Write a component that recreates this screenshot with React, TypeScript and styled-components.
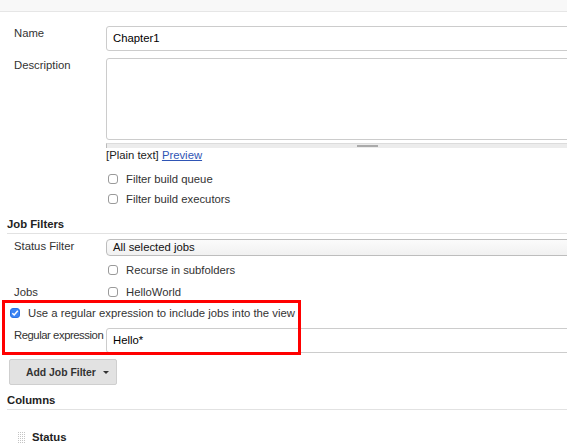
import React from 'react'
import styled, { createGlobalStyle } from 'styled-components'

const GlobalStyle = createGlobalStyle`
	html, body {
		margin: 0;
		padding: 0;
		background: #fff;
		overflow: hidden;
	}
	body {
		font-family: "Liberation Sans", Arial, sans-serif;
		font-size: 11.3px;
		color: #333;
	}
`

const TopBar = styled.div`
	height: 11px;
	background: #f8f8f8;
	border-bottom: 1px solid #e6e6e6;
`

const Page = styled.div`
	width: 640px;
	padding: 14px 0 0 7px;
`

const Row = styled.div<{ $top?: number, $height?: number }>`
	display: flex;
	align-items: flex-start;
	margin-top: ${p => p.$top ?? 0}px;
	min-height: ${p => p.$height ?? 20}px;
`

const Label = styled.div<{ $center?: boolean, $tight?: boolean }>`
	width: 99px;
	flex: none;
	box-sizing: border-box;
	padding-left: 7px;
	line-height: 14px;
	white-space: nowrap;
	letter-spacing: ${p => (p.$tight ? '-0.45px' : 'normal')};
	align-self: ${p => (p.$center ? 'center' : 'flex-start')};
`

const Field = styled.div`
	flex: 1;
	min-width: 0;
`

const TextInput = styled.div`
	box-sizing: border-box;
	height: 25px;
	border: 1px solid #ccc;
	border-radius: 3px;
	padding: 0 6px;
	line-height: 23px;
	color: #000;
	background: #fff;
`

const TextArea = styled.div`
	box-sizing: border-box;
	height: 82px;
	border: 1px solid #ccc;
	border-radius: 3px;
	background: #fff;
`

const ResizeBar = styled.div`
	position: relative;
	margin-top: 3px;
	height: 4px;
	background: #ececec;
	border-top: 1px solid #dcdcdc;
	border-left: 1px solid #bbb;
	&::after {
		content: '';
		position: absolute;
		left: 250px;
		top: 1px;
		width: 21px;
		height: 2px;
		background: #aaa;
	}
`

const Note = styled.div`
	line-height: 14px;
	color: #222;
	a {
		color: #2f55b5;
		text-decoration: underline;
	}
`

const CheckRow = styled.label<{ $indent?: number }>`
	display: flex;
	align-items: center;
	height: 20px;
	gap: 8px;
	padding-left: ${p => p.$indent ?? 2}px;
	color: #333;
	white-space: nowrap;
`

const Box = styled.span<{ $checked?: boolean }>`
	box-sizing: border-box;
	width: 10px;
	height: 10px;
	flex: none;
	border-radius: 3px;
	border: 1px solid ${p => (p.$checked ? '#2a72e6' : '#9a9a9a')};
	background: ${p => (p.$checked ? '#3b84f4' : '#fff')};
	display: flex;
	align-items: center;
	justify-content: center;
`

const SectionHeader = styled.div<{ $top?: number }>`
	padding: ${p => p.$top ?? 8}px 0 2px;
	line-height: 14px;
	font-weight: bold;
	color: #222;
	border-bottom: 1px solid #e2e2e2;
`

const Select = styled.div`
	box-sizing: border-box;
	height: 17px;
	border: 1px solid #bdbdbd;
	border-radius: 4px;
	background: linear-gradient(#fbfbfb, #f1f1f1);
	padding-left: 6px;
	line-height: 15px;
	color: #111;
`

const Highlighted = styled.div`
	position: relative;
	margin-top: 1px;
`

const Marker = styled.span`
	position: absolute;
	left: -5px;
	top: -3px;
	width: 299px;
	height: 55px;
	box-sizing: border-box;
	border: 3px solid #f00;
	pointer-events: none;
`

const Button = styled.button`
	display: flex;
	align-items: center;
	margin: 6px 0 0 2px;
	width: 108px;
	height: 26px;
	box-sizing: border-box;
	padding: 0 7px 0 16px;
	border: 1px solid #cfcfcf;
	border-radius: 2px;
	background: #e2e2e2;
	font-family: inherit;
	font-size: 10.4px;
	font-weight: bold;
	color: #333;
	white-space: nowrap;
`

const Caret = styled.span`
	flex: none;
	margin-left: auto;
	width: 0;
	height: 0;
	border-left: 3px solid transparent;
	border-right: 3px solid transparent;
	border-top: 3px solid #333;
`

const ColumnItem = styled.div`
	display: flex;
	align-items: center;
	gap: 6px;
	margin: 20px 0 0 10px;
	font-weight: bold;
	color: #222;
	line-height: 14px;
`

const Check = () => (
	<svg width="8" height="8" viewBox="0 0 8 8">
		<path d="M1.3 4.2 L3.2 6 L6.8 1.8" fill="none" stroke="#fff" strokeWidth="1.5" />
	</svg>
)

const Grip = () => (
	<svg width="9" height="13" viewBox="0 0 9 13">
		{Array.from({ length: 6 }).map((_, r) =>
			Array.from({ length: 4 }).map((_, c) => (
				<rect key={`${r}-${c}`} x={c * 2 + 1} y={r * 2 + 1} width="1" height="1" fill="#c4c4c4" />
			))
		)}
	</svg>
)

export default function App() {
	return (
		<>
			<GlobalStyle />
			<TopBar />
			<Page>
				<Row $height={25}>
					<Label>Name</Label>
					<Field><TextInput>Chapter1</TextInput></Field>
				</Row>
				<Row $top={7}>
					<Label>Description</Label>
					<Field>
						<TextArea />
						<ResizeBar />
						<Note>[Plain text] <a>Preview</a></Note>
					</Field>
				</Row>
				<Row $top={7}>
					<Label />
					<Field>
						<CheckRow><Box />Filter build queue</CheckRow>
						<CheckRow><Box />Filter build executors</CheckRow>
					</Field>
				</Row>
				<SectionHeader>Job Filters</SectionHeader>
				<Row $top={5} $height={17}>
					<Label>Status Filter</Label>
					<Field><Select>All selected jobs</Select></Field>
				</Row>
				<Row $top={4}>
					<Label />
					<Field><CheckRow><Box />Recurse in subfolders</CheckRow></Field>
				</Row>
				<Row $top={2}>
					<Label $center>Jobs</Label>
					<Field><CheckRow><Box />HelloWorld</CheckRow></Field>
				</Row>
				<Highlighted>
					<CheckRow $indent={3}><Box $checked><Check /></Box>Use a regular expression to include jobs into the view</CheckRow>
					<Row $top={5} $height={25}>
						<Label $tight>Regular expression</Label>
						<Field><TextInput>Hello*</TextInput></Field>
					</Row>
					<Marker />
				</Highlighted>
				<Button>Add Job Filter<Caret /></Button>
				<SectionHeader $top={8}>Columns</SectionHeader>
				<ColumnItem><Grip />Status</ColumnItem>
			</Page>
		</>
	)
}
